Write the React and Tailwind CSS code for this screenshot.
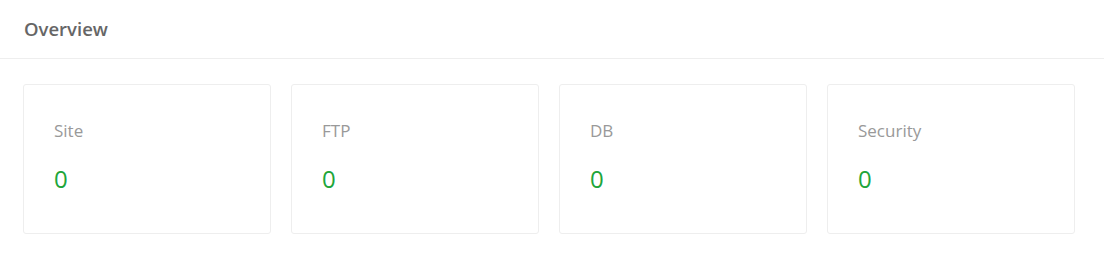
import React from 'react';

const stats = [
  { label: 'Site', value: 0 },
  { label: 'FTP', value: 0 },
  { label: 'DB', value: 0 },
  { label: 'Security', value: 0 },
];

export default function App() {
  return (
    <div className="min-h-screen bg-white font-['Open_Sans',sans-serif]">
      {/* Header */}
      <div className="h-[59px] border-b border-[#eeeeee] px-6 flex items-center">
        <h2 className="text-[18.5px] font-semibold text-[#666666] leading-7">Overview</h2>
      </div>

      {/* Cards */}
      <div className="pl-[23px] pr-[29px] pt-[25px]">
        <div className="grid grid-cols-4 gap-5">
          {stats.map((item) => (
            <div
              key={item.label}
              className="h-[150px] border border-[#eeeeee] rounded-[3px] pl-[30px] pt-[34px]"
            >
              <p className="text-[17px] leading-6 text-[#999999]">{item.label}</p>
              <p className="mt-[20px] text-[24px] leading-8 text-[#20a53a]">{item.value}</p>
            </div>
          ))}
        </div>
      </div>
    </div>
  );
}
